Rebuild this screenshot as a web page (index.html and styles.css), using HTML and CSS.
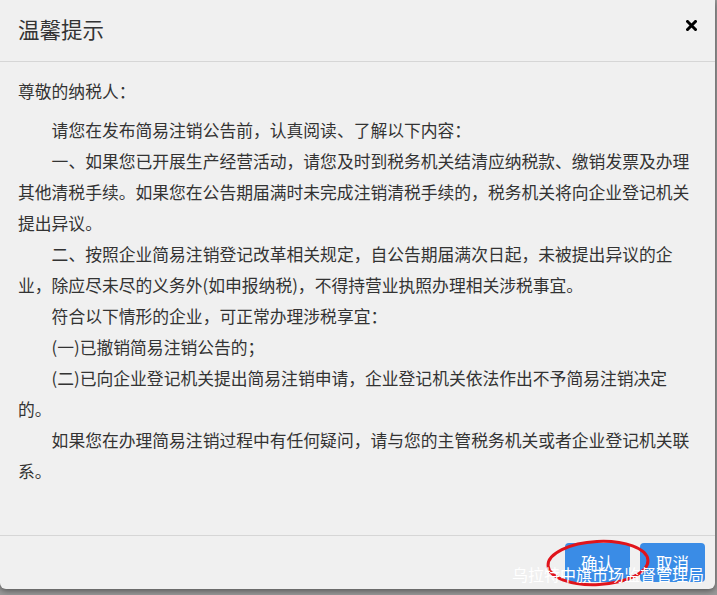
FILE: index.html
```html
<!DOCTYPE html>
<html lang="zh-CN">
<head>
<meta charset="utf-8">
<title>温馨提示</title>
<link rel="stylesheet" href="styles.css">
</head>
<body>
<div class="modal">
  <div class="modal-header">
    <h4 class="modal-title">温馨提示</h4>
    <button class="close" type="button" aria-label="关闭">
      <svg width="11" height="11" viewBox="0 0 11 11"><path d="M1.5 1.5 L9.5 9.5 M9.5 1.5 L1.5 9.5" stroke="#000" stroke-width="3" stroke-linecap="square"/></svg>
    </button>
  </div>
  <div class="modal-body">
    <p class="greet">尊敬的纳税人：</p>
    <p class="ind">请您在发布简易注销公告前，认真阅读、了解以下内容：</p>
    <p class="ind">一、如果您已开展生产经营活动，请您及时到税务机关结清应纳税款、缴销发票及办理其他清税手续。如果您在公告期届满时未完成注销清税手续的，税务机关将向企业登记机关提出异议。</p>
    <p class="ind">二、按照企业简易注销登记改革相关规定，自公告期届满次日起，未被提出异议的企业，除应尽未尽的义务外(如申报纳税)，不得持营业执照办理相关涉税事宜。</p>
    <p class="ind">符合以下情形的企业，可正常办理涉税享宜：</p>
    <p class="ind">(一)已撤销简易注销公告的；</p>
    <p class="ind">(二)已向企业登记机关提出简易注销申请，企业登记机关依法作出不予简易注销决定的。</p>
    <p class="ind">如果您在办理简易注销过程中有任何疑问，请与您的主管税务机关或者企业登记机关联系。</p>
  </div>
  <div class="modal-footer">
    <button class="btn" type="button">确认</button>
    <button class="btn" type="button">取消</button>
  </div>
  <svg class="mark" width="110" height="52" viewBox="0 0 110 52"><ellipse cx="55" cy="26" rx="50" ry="21.5" fill="none" stroke="#e0141b" stroke-width="3" transform="rotate(-3 55 26)"/></svg>
  <div class="watermark">乌拉特中旗市场监督管理局</div>
</div>
</body>
</html>
```
FILE: styles.css
```css
html, body {
  margin: 0;
  padding: 0;
}
body {
  background: #9a9a9a;
  width: 717px;
  height: 595px;
  overflow: hidden;
  font-family: "Noto Sans CJK SC", "Microsoft YaHei", sans-serif;
  color: #333;
}
.modal {
  position: relative;
  width: 715px;
  height: 589px;
  background: #f0f0f0;
  border-radius: 0 0 6px 6px;
  box-shadow: 0 2px 6px rgba(0, 0, 0, 0.45);
  display: flex;
  flex-direction: column;
}
.modal-header {
  height: 62px;
  border-bottom: 1px solid #d6d6d6;
  display: flex;
  align-items: center;
  justify-content: space-between;
  padding: 0 18px 4px 18px;
  box-sizing: border-box;
  flex: none;
}
.modal-title {
  margin: 0;
  font-size: 21.5px;
  font-weight: normal;
  color: #333;
  line-height: 1;
}
.close {
  align-self: flex-start;
  margin-top: 20px;
  border: 0;
  background: none;
  padding: 0;
  width: 11px;
  height: 11px;
  display: flex;
}
.modal-body {
  flex: none;
  height: 473px;
  box-sizing: border-box;
  padding: 14px 22px 0 18px;
  font-size: 16.8px;
  line-height: 31px;
}
.modal-body p {
  margin: 0;
}
.modal-body .greet {
  margin-bottom: 8px;
}
.modal-body .ind {
  text-indent: 2em;
}
.modal-footer {
  flex: 1;
  border-top: 1px solid #d6d6d6;
  display: flex;
  justify-content: flex-end;
  align-items: flex-start;
  gap: 10px;
  padding: 7px 10px 0 0;
}
.btn {
  height: 39px;
  padding: 0 16px;
  border: 0;
  border-radius: 4px;
  background: #3a8ce6;
  color: #fff;
  font-family: "Noto Sans CJK SC", "Microsoft YaHei", sans-serif;
  font-size: 16.5px;
  line-height: 36px;
}
.mark {
  position: absolute;
  left: 543px;
  top: 537px;
}
.watermark {
  position: absolute;
  left: 512px;
  top: 563px;
  font-size: 16px;
  line-height: 22px;
  color: #fff;
  white-space: nowrap;
}
```
